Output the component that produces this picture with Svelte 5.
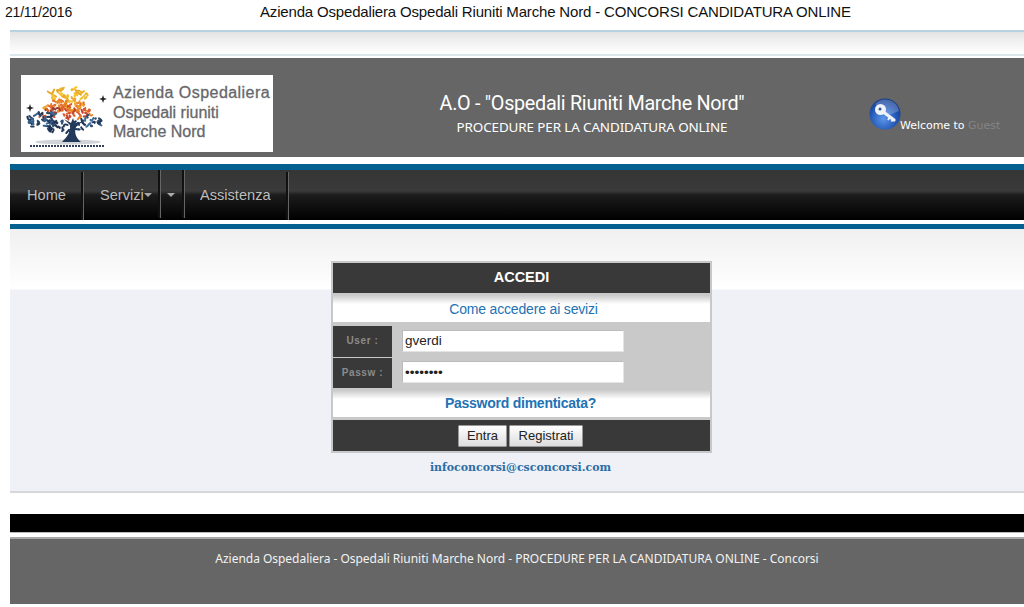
<script>
  let seed = 11;
  const rnd = () => ((seed = (seed * 16807) % 2147483647) % 1000) / 1000;
  const regions = [
    [49, 20, 21, 8, 30, ['#eeb62c', '#f2c32f', '#e8a92b']],
    [43, 30, 23, 6, 30, ['#e98a2a', '#e6702b', '#eda72c']],
    [54, 37, 22, 6, 22, ['#dc5a2b', '#e8842a', '#c8452c']],
    [36, 39, 17, 6, 14, ['#c9472c', '#a13e30', '#d9652b']],
    [20, 45, 14, 9, 26, ['#2a4468', '#34608d', '#23395a']],
    [43, 52, 19, 6, 26, ['#23395a', '#2d4c70', '#1f3050']],
    [69, 47, 12, 5, 16, ['#2d4c70', '#3f6d96', '#23395a']]
  ];
  const strokes = [];
  for (const [cx, cy, rx, ry, n, colors] of regions) {
    for (let i = 0; i < n; i++) {
      const a = rnd() * 6.283;
      const r = Math.sqrt(rnd());
      const x = cx + Math.cos(a) * rx * r;
      const y = cy + Math.sin(a) * ry * r;
      const dx = (rnd() - 0.5) * 8;
      const dy = (rnd() - 0.5) * 7;
      const qx = (rnd() - 0.5) * 7;
      const qy = (rnd() - 0.5) * 7;
      strokes.push({
        d: `M${x.toFixed(1)} ${y.toFixed(1)}q${qx.toFixed(1)} ${qy.toFixed(1)} ${dx.toFixed(1)} ${dy.toFixed(1)}`,
        c: colors[i % colors.length]
      });
    }
  }
</script>

<div class="page">
  <header class="print">
    <span class="date">21/11/2016</span>
    <span class="title">Azienda Ospedaliera Ospedali Riuniti Marche Nord - CONCORSI CANDIDATURA ONLINE</span>
  </header>

  <div class="main">
    <div class="strip"></div>

    <section class="banner">
      <div class="logo">
        <svg class="tree" width="88" height="77" viewBox="0 0 88 77" aria-hidden="true">
          <ellipse cx="47" cy="67" rx="33" ry="2.500" fill="#aab0b8" opacity=".55" />
          <g fill="none" stroke-width="2" stroke-linecap="round">
            {#each strokes as s}
              <path d={s.d} stroke={s.c} />
            {/each}
          </g>
          <path d="M49 50c1 7-3 12-8 17h19c-5-4-7-9-5-15l7-6-8 3-2-6-2 5-7-4z" fill="#23395a" />
          <path d="M9 71h74" stroke="#33405a" stroke-width="2" stroke-dasharray="2 1" />
          <path d="M5 33l3-1l1-3l1 3l3 1l-3 1l-1 3l-1-3z" fill="#222" />
          <path d="M78 24l3-1l1-3l1 3l3 1l-3 1l-1 3l-1-3z" fill="#222" />
        </svg>
        <div class="logo-text">
          <span class="first">Azienda Ospedaliera</span>
          <span>Ospedali riuniti</span>
          <span>Marche Nord</span>
        </div>
      </div>
      <div class="heading">
        <h1>A.O - "Ospedali Riuniti Marche Nord"</h1>
        <h2>PROCEDURE PER LA CANDIDATURA ONLINE</h2>
      </div>
      <div class="welcome">
        <svg class="key" width="32" height="32" viewBox="0 0 32 32" aria-hidden="true">
          <defs>
            <radialGradient id="orb" cx="45%" cy="65%" r="65%">
              <stop offset="0" stop-color="#5b97ea" />
              <stop offset=".65" stop-color="#2457b5" />
              <stop offset="1" stop-color="#123a86" />
            </radialGradient>
          </defs>
          <circle cx="16" cy="16" r="15.500" fill="url(#orb)" />
          <path d="M6 6a14 14 0 0 1 24 7L20 17z" fill="#fff" opacity=".22" />
          <path d="M13 13l12 9" stroke="#eef2fa" stroke-width="3.200" stroke-linecap="round" />
          <path d="M21 19l-2 3M24 21l-1.500 2.500" stroke="#eef2fa" stroke-width="2" />
          <circle cx="11.500" cy="11.500" r="5.500" fill="#eef2fa" />
          <circle cx="11" cy="11" r="1.500" fill="#33558f" />
        </svg>
        <span class="hello">Welcome to <b>Guest</b></span>
      </div>
    </section>

    <nav class="menu">
      <a href="#home" class="item home">Home</a>
      <a href="#servizi" class="item servizi">Servizi<i class="caret"></i></a>
      <a href="#more" class="item more" aria-label="Apri menu"><i class="caret"></i></a>
      <a href="#assistenza" class="item help">Assistenza</a>
    </nav>

    <section class="content">
      <div class="panel">
        <div class="panel-title">ACCEDI</div>
        <a href="#come" class="light-row">Come accedere ai sevizi</a>
        <div class="fields">
          <div class="field">
            <label for="user">User :</label>
            <input id="user" type="text" value="gverdi" />
          </div>
          <div class="field">
            <label for="pass">Passw :</label>
            <input id="pass" type="password" value="password" />
          </div>
        </div>
        <a href="#pw" class="light-row strong">Password dimenticata?</a>
        <div class="actions">
          <button type="button">Entra</button>
          <button type="button">Registrati</button>
        </div>
      </div>
      <a href="#mail" class="mail">infoconcorsi@csconcorsi.com</a>
    </section>

    <div class="blackbar"></div>
    <footer>Azienda Ospedaliera - Ospedali Riuniti Marche Nord - PROCEDURE PER LA CANDIDATURA ONLINE - Concorsi</footer>
  </div>
</div>

<style>
  :global(body) {
    margin: 0;
    background: #fff;
  }
  .page {
    width: 1024px;
    height: 607px;
    overflow: hidden;
    font-family: "Liberation Sans", Arial, sans-serif;
  }
  .print {
    height: 30px;
    display: flex;
    align-items: flex-start;
    padding: 3px 0 0 5px;
    box-sizing: border-box;
    line-height: 17px;
    color: #111;
  }
  .date {
    width: 255px;
    font-size: 14px;
    letter-spacing: -0.2px;
    padding-top: 1px;
  }
  .title {
    font-size: 15px;
    letter-spacing: -0.17px;
    white-space: nowrap;
  }
  .main {
    margin-left: 10px;
  }
  .strip {
    height: 22px;
    border-top: 2px solid #b7d3df;
    border-bottom: 2px solid #dbe6ea;
    background: linear-gradient(#e3e3e3, #f1f1f1 45%, #fff);
  }
  .banner {
    margin-top: 2px;
    height: 99px;
    background: #666;
    display: flex;
    color: #fff;
  }
  .logo {
    margin: 17px 0 0 11px;
    width: 252px;
    height: 77px;
    background: #fff;
    display: flex;
    box-sizing: border-box;
  }
  .tree {
    flex: none;
  }
  .logo-text {
    display: flex;
    flex-direction: column;
    margin: 8px 0 0 4px;
    font-size: 16px;
    line-height: 19.500px;
    color: #66676a;
    -webkit-text-stroke: 0.3px #66676a;
    white-space: nowrap;
  }
  .logo-text .first {
    letter-spacing: 0.45px;
  }
  .heading {
    width: 380px;
    margin-left: 129px;
    text-align: center;
    flex: none;
  }
  h1 {
    margin: 33px 0 0;
    font-size: 19.800px;
    line-height: 26px;
    font-weight: 400;
    letter-spacing: -0.3px;
    font-family: Roboto, "Liberation Sans", sans-serif;
    white-space: nowrap;
  }
  h2 {
    margin: 1px 0 0;
    font-size: 13.450px;
    line-height: 18px;
    font-weight: 400;
    font-family: "Noto Sans", sans-serif;
    letter-spacing: -0.12px;
    white-space: nowrap;
  }
  .welcome {
    margin: 40px 0 0 87px;
    display: flex;
    align-items: flex-start;
    white-space: nowrap;
    font-family: "DejaVu Sans", sans-serif;
    font-size: 11px;
  }
  .key {
    flex: none;
    margin-right: -1px;
  }
  .hello {
    margin-top: 21px;
    line-height: 14px;
    letter-spacing: -0.03px;
  }
  .hello b {
    color: #858585;
    font-weight: 400;
  }
  .menu {
    margin-top: 7px;
    height: 50px;
    border-top: 6px solid #04608f;
    background: linear-gradient(#353535 0, #3a3a3a 42%, #1c1c1c 50%, #000 100%);
    display: flex;
    font-size: 14.600px;
  }
  .item {
    height: 48px;
    box-sizing: border-box;
    color: #bdbdbd;
    text-decoration: none;
    display: flex;
    align-items: center;
    border-right: 2px solid #111;
    box-shadow: 1px 0 0 #666;
  }
  .home {
    width: 73px;
    padding-left: 17px;
    margin-top: 2px;
    padding-bottom: 2px;
  }
  .servizi {
    width: 77px;
    padding-left: 17px;
    padding-top: 1px;
  }
  .more {
    width: 24px;
    padding-left: 7px;
    padding-top: 2px;
  }
  .help {
    width: 104px;
    padding-left: 16px;
    margin-top: 2px;
    padding-bottom: 2px;
  }
  .caret {
    display: block;
    width: 0;
    height: 0;
    border: 4px solid transparent;
    border-top-color: #aaa;
    margin-top: 4px;
  }
  .content {
    margin-top: 4px;
    height: 230px;
    border-top: 5px solid #04608f;
    border-bottom: 2px solid #d8d8d8;
    background: linear-gradient(#f0f0f0 0, #fff 60px, #eff1f6 61px);
    display: flex;
    flex-direction: column;
    align-items: center;
    padding: 32px 0 0 9px;
    margin-bottom: 21px;
  }
  .panel {
    width: 381px;
    box-sizing: border-box;
    border: 2px solid #c8c8c8;
    background: #c9c9c9;
  }
  .panel-title {
    height: 30px;
    line-height: 29px;
    background: #393939;
    color: #fff;
    font-size: 14.500px;
    font-weight: 700;
    text-align: center;
  }
  .light-row {
    display: block;
    height: 27px;
    line-height: 28px;
    margin-top: 2px;
    background: linear-gradient(#c9c9c9 0, #fff 9px);
    color: #2272b4;
    font-size: 14px;
    letter-spacing: -0.17px;
    text-align: center;
    text-decoration: none;
    padding-left: 4px;
  }
  .light-row.strong {
    font-weight: 700;
    font-size: 14px;
    letter-spacing: -0.25px;
    line-height: 27px;
    margin-top: 2px;
    padding: 0 2px 0 0;
  }
  .fields {
    padding-top: 4px;
  }
  .field {
    display: flex;
    height: 30px;
    margin-top: 1px;
    align-items: center;
  }
  .field:first-child {
    margin-top: 0;
    height: 31px;
  }
  .field label {
    width: 59px;
    height: 100%;
    box-sizing: border-box;
    padding-bottom: 2px;
    background: #393939;
    color: #8b8b8b;
    font-size: 10px;
    font-weight: 700;
    letter-spacing: 0.6px;
    display: flex;
    align-items: center;
    justify-content: center;
  }
  .field input {
    width: 222px;
    height: 22px;
    margin: -2px 0 0 10px;
    box-sizing: border-box;
    border: 1px solid #bbb;
    border-right-color: #e4e4e4;
    border-bottom-color: #e4e4e4;
    padding: 0 2px;
    font-family: "Liberation Sans", Arial, sans-serif;
    font-size: 13.500px;
    color: #222;
    background: #fff;
    outline: none;
  }
  .actions {
    height: 31px;
    margin-top: 3px;
    background: #393939;
    display: flex;
    justify-content: center;
    align-items: center;
    gap: 2px;
    padding-right: 2px;
  }
  button {
    height: 22px;
    padding: 0 8px;
    background: linear-gradient(#fff, #ddd);
    border: 1px solid #999;
    border-radius: 1px;
    font-family: "Liberation Sans", Arial, sans-serif;
    font-size: 13px;
    color: #222;
  }
  button:last-child {
    width: 74px;
  }
  .mail {
    margin-top: 8px;
    font-family: "DejaVu Serif", serif;
    font-size: 10.950px;
    font-weight: 700;
    line-height: 14px;
    color: #2a6ea6;
    text-decoration: none;
    padding-right: 2px;
    white-space: nowrap;
  }
  .blackbar {
    height: 18px;
    background: #000;
    border-bottom: 1px solid #bbb;
  }
  footer {
    margin-top: 4px;
    height: 65px;
    background: #666;
    border-top: 2px solid #a8a8a8;
    color: #f2f2f2;
    font-family: "Noto Sans", sans-serif;
    font-size: 12px;
    line-height: 40px;
    letter-spacing: -0.03px;
    text-align: center;
  }
</style>
